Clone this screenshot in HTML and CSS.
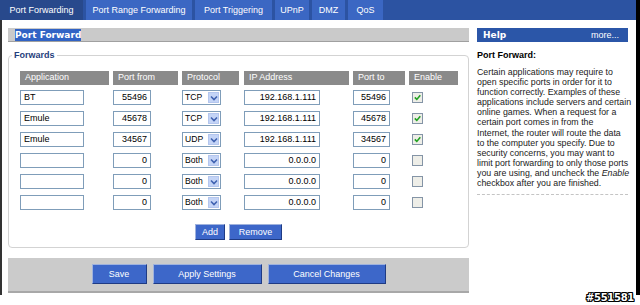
FILE: index.html
```html
<!DOCTYPE html>
<html>
<head>
<meta charset="utf-8">
<link rel="stylesheet" href="styles.css">
</head>
<body>
<div class="screen">
  <div class="main-col">
    <nav class="nav">
      <div class="tab active">Port Forwarding</div>
      <div class="tab w106">Port Range Forwarding</div>
      <div class="tab w77">Port Triggering</div>
      <div class="tab w34">UPnP</div>
      <div class="tab w33">DMZ</div>
      <div class="tab w35">QoS</div>
    </nav>
    <div class="content">
      <div class="left">
        <div class="titlebar"><span class="sel">Port Forward</span></div>
        <fieldset class="forwards">
          <legend>Forwards</legend>
          <div class="inner">
            <div class="grid">
              <div class="th w89">Application</div>
              <div class="th w65">Port from</div>
              <div class="th w57">Protocol</div>
              <div class="th w105">IP Address</div>
              <div class="th w52">Port to</div>
              <div class="th w49">Enable</div>

              <div class="in app">BT</div>
              <div class="in pf">55496</div>
              <div class="dd"><span class="dd-t">TCP</span><span class="dd-a"><svg width="8" height="6" viewBox="0 0 8 6"><path d="M1 1.5 L4 4.5 L7 1.5" fill="none" stroke="#3f62b0" stroke-width="1.6"/></svg></span></div>
              <div class="in ip">192.168.1.111</div>
              <div class="in pt">55496</div>
              <div class="cb"><svg width="7" height="7" viewBox="0 0 7 7"><path d="M0.8 3.4 L2.8 5.4 L6.3 1.2" fill="none" stroke="#21a121" stroke-width="1.6"/></svg></div>

              <div class="in app">Emule</div>
              <div class="in pf">45678</div>
              <div class="dd"><span class="dd-t">TCP</span><span class="dd-a"><svg width="8" height="6" viewBox="0 0 8 6"><path d="M1 1.5 L4 4.5 L7 1.5" fill="none" stroke="#3f62b0" stroke-width="1.6"/></svg></span></div>
              <div class="in ip">192.168.1.111</div>
              <div class="in pt">45678</div>
              <div class="cb"><svg width="7" height="7" viewBox="0 0 7 7"><path d="M0.8 3.4 L2.8 5.4 L6.3 1.2" fill="none" stroke="#21a121" stroke-width="1.6"/></svg></div>

              <div class="in app">Emule</div>
              <div class="in pf">34567</div>
              <div class="dd"><span class="dd-t">UDP</span><span class="dd-a"><svg width="8" height="6" viewBox="0 0 8 6"><path d="M1 1.5 L4 4.5 L7 1.5" fill="none" stroke="#3f62b0" stroke-width="1.6"/></svg></span></div>
              <div class="in ip">192.168.1.111</div>
              <div class="in pt">34567</div>
              <div class="cb"><svg width="7" height="7" viewBox="0 0 7 7"><path d="M0.8 3.4 L2.8 5.4 L6.3 1.2" fill="none" stroke="#21a121" stroke-width="1.6"/></svg></div>

              <div class="in app"></div>
              <div class="in pf">0</div>
              <div class="dd"><span class="dd-t">Both</span><span class="dd-a"><svg width="8" height="6" viewBox="0 0 8 6"><path d="M1 1.5 L4 4.5 L7 1.5" fill="none" stroke="#3f62b0" stroke-width="1.6"/></svg></span></div>
              <div class="in ip">0.0.0.0</div>
              <div class="in pt">0</div>
              <div class="cb"></div>

              <div class="in app"></div>
              <div class="in pf">0</div>
              <div class="dd"><span class="dd-t">Both</span><span class="dd-a"><svg width="8" height="6" viewBox="0 0 8 6"><path d="M1 1.5 L4 4.5 L7 1.5" fill="none" stroke="#3f62b0" stroke-width="1.6"/></svg></span></div>
              <div class="in ip">0.0.0.0</div>
              <div class="in pt">0</div>
              <div class="cb"></div>

              <div class="in app"></div>
              <div class="in pf">0</div>
              <div class="dd"><span class="dd-t">Both</span><span class="dd-a"><svg width="8" height="6" viewBox="0 0 8 6"><path d="M1 1.5 L4 4.5 L7 1.5" fill="none" stroke="#3f62b0" stroke-width="1.6"/></svg></span></div>
              <div class="in ip">0.0.0.0</div>
              <div class="in pt">0</div>
              <div class="cb"></div>
            </div>
            <div class="rowbtns">
              <div class="btn small w30">Add</div>
              <div class="btn small w53">Remove</div>
            </div>
          </div>
        </fieldset>
        <div class="btnbar">
          <div class="btn big w55">Save</div>
          <div class="btn big w109">Apply Settings</div>
          <div class="btn big w118">Cancel Changes</div>
        </div>
      </div>
      <aside class="help">
        <div class="help-head"><span class="help-title">Help</span><span class="more">more...</span></div>
        <div class="help-sub">Port Forward:</div>
        <p class="help-text">Certain applications may require to<br>open specific ports in order for it to<br>function correctly. Examples of these<br>applications include servers and certain<br>online games. When a request for a<br>certain port comes in from the<br>Internet, the router will route the data<br>to the computer you specify. Due to<br>security concerns, you may want to<br>limit port forwarding to only those ports<br>you are using, and uncheck the <i>Enable</i><br>checkbox after you are finished.</p>
        <div class="dash"></div>
      </aside>
    </div>
  </div>
  <div class="strip"></div>
</div>
<div class="mark">#551581</div>
</body>
</html>
```

FILE: styles.css
```css
html, body {
  margin: 0;
  padding: 0;
}
body {
  width: 640px;
  height: 305px;
  overflow: hidden;
  background: #fff;
  font-family: "Liberation Sans", Arial, sans-serif;
  font-size: 9px;
  color: #000;
  position: relative;
}
.screen {
  display: flex;
  height: 295px;
}
.main-col {
  width: 636px;
  display: flex;
  flex-direction: column;
}
.strip {
  width: 4px;
  background: #000;
}
.nav {
  height: 20px;
  background: #2c53a2;
  display: flex;
  gap: 3px;
}
.tab {
  width: 83px;
  background: #3b67c3;
  color: #fff;
  line-height: 20px;
  text-align: center;
  white-space: nowrap;
}
.tab.active { background: #28498c; }
.tab.w106 { width: 106px; }
.tab.w77 { width: 77px; }
.tab.w34 { width: 34px; }
.tab.w33 { width: 33px; }
.tab.w35 { width: 35px; }

.content {
  flex: 1;
  display: flex;
  border-left: 2px solid #333;
  padding: 8px 0 0 6px;
}
.left {
  width: 461px;
}
.titlebar {
  height: 13px;
  background: #cacaca;
  border-bottom: 1px solid #a0a0a0;
  padding-left: 7px;
  display: flex;
  align-items: center;
}
.sel {
  background: #3163c5;
  color: #fff;
  font-family: "DejaVu Sans", Verdana, sans-serif;
  font-weight: bold;
  font-size: 9px;
  line-height: 12px;
  height: 12px;
}
.forwards {
  margin: 8px 0 0 0;
  padding: 0;
  width: 461px;
  box-sizing: border-box;
  min-width: 0;
  border: 1px solid #d3d3d3;
  border-radius: 4px;
}
.forwards legend {
  margin-left: 3px;
  padding: 0 2px;
  font-weight: bold;
  font-size: 9px;
  line-height: 11px;
  color: #1f3e7c;
}
.inner {
  padding: 10px 0 7px 11px;
}
.grid {
  display: grid;
  grid-template-columns: 93px 69px 62px 109px 56px 50px;
  grid-template-rows: 13px repeat(6, 15px);
  row-gap: 6px;
}
.grid > .th { margin-bottom: -1px; }
.th {
  background: #8a8a8a;
  color: #fff;
  line-height: 13px;
  padding-left: 5px;
  box-sizing: border-box;
  white-space: nowrap;
}
.th.w89 { width: 89px; }
.th.w65 { width: 65px; }
.th.w57 { width: 57px; }
.th.w105 { width: 105px; }
.th.w52 { width: 52px; }
.th.w49 { width: 49px; }
.in {
  height: 15px;
  box-sizing: border-box;
  border: 1px solid #7f9db9;
  background: #fff;
  line-height: 13px;
  padding: 0 3px;
  white-space: nowrap;
  text-align: right;
}
.in.app { width: 64px; text-align: left; }
.in.pf { width: 38px; }
.in.ip { width: 76px; }
.in.pt { width: 37px; }
.dd {
  width: 39px;
  height: 15px;
  box-sizing: border-box;
  border: 1px solid #7f9db9;
  display: flex;
  align-items: center;
  justify-content: space-between;
  padding: 0 1px 0 2px;
  white-space: nowrap;
}
.dd-t { line-height: 13px; font-size: 8.6px; }
.dd-a {
  width: 11px;
  height: 11px;
  flex: none;
  background: #c4d4f6;
  border: 1px solid #b4c6ee;
  box-sizing: border-box;
  display: flex;
  align-items: center;
  justify-content: center;
}
.cb {
  width: 11px;
  height: 11px;
  margin: 2px 0 0 3px;
  box-sizing: border-box;
  border: 1px solid #8494a6;
  background: #eeeee8;
  display: flex;
  align-items: center;
  justify-content: center;
}
.rowbtns {
  margin-top: 14px;
  margin-left: -11px;
  display: flex;
  justify-content: center;
  gap: 4px;
}
.btn {
  background: #3d67c9;
  color: #fff;
  text-align: center;
  box-sizing: border-box;
  border: 1px solid;
  border-color: #9fb2dd #1f3b84 #1f3b84 #9fb2dd;
  white-space: nowrap;
}
.btn.small { height: 16px; line-height: 14px; }
.btn.big { height: 20px; line-height: 18px; }
.btn.w30 { width: 30px; }
.btn.w53 { width: 53px; }
.btn.w55 { width: 55px; }
.btn.w109 { width: 109px; }
.btn.w118 { width: 118px; }
.btnbar {
  margin-top: 10px;
  height: 35px;
  box-sizing: border-box;
  background: #cbcbcb;
  border-bottom: 2px solid #a8a8a8;
  display: flex;
  align-items: center;
  justify-content: center;
  gap: 6px;
  padding-bottom: 1px;
}
.help {
  width: 151px;
  margin-left: 8px;
}
.help-head {
  height: 14px;
  background: #2b56a8;
  color: #fff;
  display: flex;
  align-items: center;
  justify-content: space-between;
  padding: 0 9px 0 6px;
}
.help-title {
  font-family: "DejaVu Sans", Verdana, sans-serif;
  font-weight: bold;
  font-size: 9px;
}
.help-sub {
  margin-top: 8px;
  font-weight: bold;
  line-height: 10px;
}
.help-text {
  margin: 7px 0 0 0;
  font-size: 8.8px;
  line-height: 10.1px;
  white-space: nowrap;
  color: #1a1a1a;
}
.dash {
  margin-top: 6px;
  border-top: 1px dashed #c4c4c4;
}
.mark {
  position: absolute;
  right: 6px;
  bottom: 2px;
  font-family: "DejaVu Sans", sans-serif;
  font-weight: bold;
  font-size: 10px;
  color: #fff;
  text-shadow: 1px 0 0 #000, -1px 0 0 #000, 0 1px 0 #000, 0 -1px 0 #000, 1px 1px 0 #000, -1px -1px 0 #000, 1px -1px 0 #000, -1px 1px 0 #000;
  letter-spacing: -0.3px;
}
```
